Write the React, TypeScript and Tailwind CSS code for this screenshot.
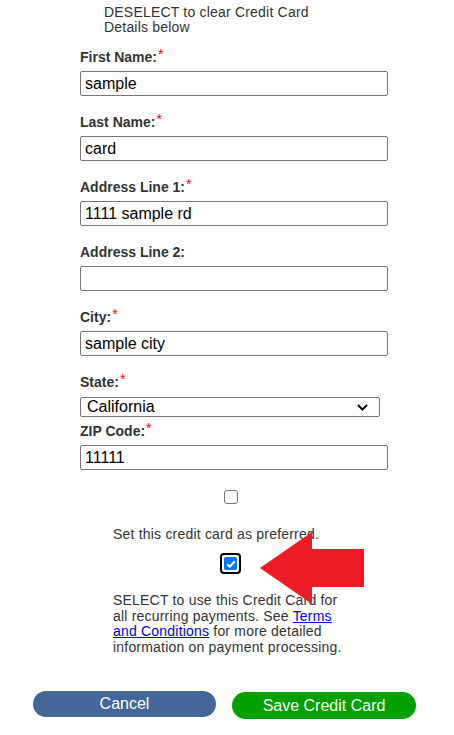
import React from "react";

// label + input pair for the card address form
function Field({
  label,
  value,
  required,
}: {
  label: string;
  value: string;
  required?: boolean;
}) {
  return (
    <div className="mb-[18px]">
      <label className="block h-4 text-[14px] leading-4 font-bold text-[#333]">
        {label}
        {required && <sup className="text-[#f00] font-normal text-[14px] top-[-3px] ml-[1px]">*</sup>}
      </label>
      <input
        readOnly
        value={value}
        className="mt-[6px] block w-[308px] h-[25px] border border-[#767676] rounded-[2px] px-[4px] text-[16px] text-black outline-none"
      />
    </div>
  );
}

export default function App() {
  return (
    <div className="relative w-[454px] h-[735px] overflow-hidden bg-white text-[#333] font-['Liberation_Sans',Arial,sans-serif]">
      <div className="pt-[5px] pl-[104px] text-[14px] leading-[15px] tracking-[0.2px]">
        DESELECT to clear Credit Card
        <br />
        Details below
      </div>

      <div className="ml-[80px] mt-[14px] w-[308px]">
        <Field label="First Name:" value="sample" required />
        <Field label="Last Name:" value="card" required />
        <Field label="Address Line 1:" value="1111 sample rd" required />
        <Field label="Address Line 2:" value="" />
        <Field label="City:" value="sample city" required />

        <div className="mb-[6px]">
          <label className="block h-4 text-[14px] leading-4 font-bold">
            State:
            <sup className="text-[#f00] font-normal text-[14px] top-[-3px] ml-[1px]">*</sup>
          </label>
          <div className="relative mt-[7px] w-[300px] h-[20px] border border-[#767676] rounded-[2px] flex items-center">
            <span className="pl-[6px] text-[16px] leading-[18px] text-black">California</span>
            <svg className="absolute right-[11px] top-[6px]" width="11" height="7" viewBox="0 0 11 7">
              <path d="M1 1l4.5 4.5L10 1" fill="none" stroke="#000" strokeWidth="2" />
            </svg>
          </div>
        </div>

        <label className="block h-4 text-[14px] leading-4 font-bold">
          ZIP Code:
          <sup className="text-[#f00] font-normal text-[14px] top-[-3px] ml-[1px]">*</sup>
        </label>
        <input
          readOnly
          value="11111"
          className="mt-[6px] block w-[308px] h-[25px] border border-[#767676] rounded-[2px] px-[4px] text-[16px] text-black outline-none"
        />
      </div>

      <div className="ml-[113px] w-[235px] text-[14px] leading-[15.5px] tracking-[0.2px]">
        <div className="mt-[20px] flex justify-center">
          <div className="w-[14px] h-[14px] border border-[#767676] rounded-[3px] bg-white" />
        </div>
        <p className="mt-[22px] leading-4">Set this credit card as preferred.</p>
        <div className="mt-[11px] flex justify-center">
          <div className="w-[21px] h-[21px] border-2 border-black rounded-[4px] bg-white flex items-center justify-center">
            <div className="w-[13px] h-[13px] bg-[#0075ff] rounded-[2px] flex items-center justify-center">
              <svg width="10" height="8" viewBox="0 0 10 8">
                <path d="M1.2 4.2l2.6 2.5L8.8 1.3" fill="none" stroke="#fff" strokeWidth="2" />
              </svg>
            </div>
          </div>
        </div>
        <p className="mt-[19px]">
          SELECT to use this Credit Card for all recurring payments. See{" "}
          <a href="#" className="text-[#0000ee] underline">
            Terms and Conditions
          </a>{" "}
          for more detailed information on payment processing.
        </p>
      </div>

      <div className="mt-[36px] pl-[33px] flex items-start gap-[16px]">
        <button className="w-[183px] h-[26px] rounded-full bg-[#456699] text-white text-[16px]">
          Cancel
        </button>
        <button className="mt-[1px] w-[184px] h-[27px] rounded-full bg-[#00a000] text-white text-[16px]">
          Save Credit Card
        </button>
      </div>

      {/* red pointer arrow drawn over the checkbox row */}
      <svg className="absolute left-[260px] top-[532px] z-10" width="104" height="72" viewBox="0 0 104 72">
        <polygon points="0,36 52,0 52,17 104,17 104,55 52,55 52,72" fill="#ed1c24" />
      </svg>
    </div>
  );
}
